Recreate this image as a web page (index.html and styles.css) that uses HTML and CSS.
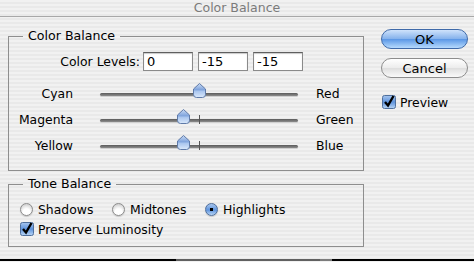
FILE: index.html
```html
<!DOCTYPE html>
<html>
  <head>
    <link rel="stylesheet" href="styles.css">
  </head>
  <body>
    <div class="titlebar">Color Balance</div>
    <div class="dialog">
      <div class="panels">
        <fieldset class="group levels">
          <legend>Color Balance</legend>
          <div class="levels-row">
            <span class="levels-label">Color Levels:</span>
            <input class="level" type="text" value="0">
            <input class="level" type="text" value="-15">
            <input class="level" type="text" value="-15">
          </div>
          <div class="slider-row">
            <span class="slider-label">Cyan</span>
            <div class="track">
              <svg class="thumb" style="left: 93px" width="13" height="15" viewBox="0 0 13 15">
                <use href="#thumbShape"/>
              </svg>
            </div>
            <span class="slider-end">Red</span>
          </div>
          <div class="slider-row">
            <span class="slider-label">Magenta</span>
            <div class="track">
              <span class="tick"></span>
              <svg class="thumb" style="left: 77px" width="13" height="15" viewBox="0 0 13 15">
                <use href="#thumbShape"/>
              </svg>
            </div>
            <span class="slider-end">Green</span>
          </div>
          <div class="slider-row">
            <span class="slider-label">Yellow</span>
            <div class="track">
              <span class="tick"></span>
              <svg class="thumb" style="left: 77px" width="13" height="15" viewBox="0 0 13 15">
                <use href="#thumbShape"/>
              </svg>
            </div>
            <span class="slider-end">Blue</span>
          </div>
        </fieldset>
        <fieldset class="group tones">
          <legend>Tone Balance</legend>
          <div class="radio-row">
            <label class="option"><span class="radio"></span>Shadows</label>
            <label class="option"><span class="radio"></span>Midtones</label>
            <label class="option"><span class="radio checked"></span>Highlights</label>
          </div>
          <label class="check-row">
            <svg class="checkbox" width="14" height="14" viewBox="0 0 14 14"><use href="#checkShape"/></svg>Preserve Luminosity
          </label>
        </fieldset>
      </div>
      <div class="actions">
        <button class="pill default">OK</button>
        <button class="pill">Cancel</button>
        <label class="check-row preview">
          <svg class="checkbox" width="14" height="14" viewBox="0 0 14 14"><use href="#checkShape"/></svg>Preview
        </label>
      </div>
    </div>
    <div class="dock">
      <span class="dock-dark"></span>
      <span class="dock-app"></span>
      <span class="dock-edge"></span>
    </div>

    <svg width="0" height="0" class="defs">
      <defs>
        <linearGradient id="thumbFill" x1="0" y1="0" x2="0" y2="1">
          <stop offset="0" stop-color="#c9dbf4"/>
          <stop offset="0.45" stop-color="#7fa3dc"/>
          <stop offset="0.55" stop-color="#a9c5ee"/>
          <stop offset="1" stop-color="#dbe9fb"/>
        </linearGradient>
        <linearGradient id="checkFill" x1="0" y1="0" x2="0" y2="1">
          <stop offset="0" stop-color="#a8c6ee"/>
          <stop offset="0.5" stop-color="#5e93dc"/>
          <stop offset="1" stop-color="#b9d6f6"/>
        </linearGradient>
        <g id="thumbShape">
          <path d="M6.5 0.5 L12.5 6 V11.5 Q12.5 14.5 9.5 14.5 H3.5 Q0.5 14.5 0.5 11.5 V6 Z" fill="url(#thumbFill)" stroke="#5f7aa8"/>
        </g>
        <g id="checkShape">
          <rect x="0.5" y="0.5" width="13" height="13" rx="2" fill="url(#checkFill)" stroke="#4f6f9c"/>
          <path d="M3 7 L6 10.5 L11.5 1" fill="none" stroke="#000" stroke-width="2.4"/>
        </g>
      </defs>
    </svg>
  </body>
</html>
```
FILE: styles.css
```css
html, body {
    margin: 0;
    padding: 0;
}
body {
    width: 474px;
    height: 262px;
    overflow: hidden;
    font-family: "DejaVu Sans", sans-serif;
    font-size: 12.4px;
    color: #000;
    background: repeating-linear-gradient(to bottom, #f1f1f1 0 2px, #e9e9e9 2px 4px);
}
.defs {
    position: absolute;
}
.titlebar {
    height: 16px;
    line-height: 16px;
    text-align: center;
    color: #7b7b7b;
    font-size: 12.5px;
    border-bottom: 1px solid #a8a8a8;
}
.dialog {
    display: flex;
    padding-left: 8px;
    margin-top: 11px;
}
.panels {
    width: 356px;
}
.group {
    margin: 0;
    padding: 0;
    min-width: 0;
    border: 1px solid #8e8e8e;
}
.group legend {
    margin-left: 14px;
    padding: 0 5px;
    height: 16px;
    line-height: 16px;
    font-size: 12.6px;
}
.levels {
    padding-bottom: 12px;
}
.levels-row {
    display: flex;
    align-items: center;
    margin-top: 8px;
}
.levels-label {
    width: 131px;
    padding-right: 3px;
    text-align: right;
}
.level {
    box-sizing: border-box;
    width: 50px;
    height: 19px;
    margin: 0 5px 0 0;
    padding: 0 3px;
    border: 1px solid #8a8a8a;
    border-top-color: #5f5f5f;
    box-shadow: inset 0 1px 1px #c9c9c9;
    background: #fff;
    font: inherit;
    font-size: 13px;
    color: #000;
}
.slider-row {
    display: flex;
    align-items: center;
    height: 26px;
}
.levels-row + .slider-row {
    margin-top: 9px;
}
.slider-label {
    width: 64px;
    text-align: right;
}
.track {
    position: relative;
    width: 198px;
    height: 3px;
    margin-left: 27px;
    margin-top: 2px;
    border-radius: 2px;
    background: linear-gradient(to bottom, #5a5a5a, #8d8d8d);
    box-shadow: 0 1px 0 #d0d0d0;
}
.thumb {
    position: absolute;
    top: -10px;
}
.tick {
    position: absolute;
    left: 99px;
    top: -4px;
    width: 1px;
    height: 9px;
    background: #555;
}
.slider-end {
    margin-left: 18px;
}
.tones {
    margin-top: 5px;
    padding-bottom: 7px;
}
.radio-row {
    display: flex;
    align-items: center;
    height: 20px;
    margin-top: 7px;
    padding-left: 11px;
}
.option {
    display: flex;
    align-items: center;
    gap: 5px;
}
.option:nth-child(1) { width: 92px; }
.option:nth-child(2) { width: 93px; }
.radio {
    box-sizing: border-box;
    width: 13px;
    height: 13px;
    border-radius: 50%;
    border: 1px solid #8c8c8c;
    background: radial-gradient(circle at 50% 75%, #ffffff 0 35%, #dcdcdc 70%, #c4c4c4);
    box-shadow: 0 1px 1px #c8c8c8;
}
.radio.checked {
    border-color: #4f6f9c;
    background: radial-gradient(circle, #000 0 1.6px, transparent 2px),
                linear-gradient(to bottom, #a8c6ee, #5e93dc 55%, #b9d6f6);
}
.check-row {
    display: flex;
    align-items: center;
    gap: 4px;
    height: 20px;
    padding-left: 11px;
}
.actions {
    display: flex;
    flex-direction: column;
    margin-left: 17px;
    padding-top: 1px;
}
.pill {
    box-sizing: border-box;
    width: 87px;
    height: 20px;
    margin-bottom: 9px;
    padding: 0;
    border: 1px solid #8d8d8d;
    border-radius: 10px;
    background: linear-gradient(to bottom, #ffffff, #ececec 50%, #dedede 51%, #fafafa);
    font: inherit;
    font-size: 13px;
    color: #000;
}
.pill.default {
    border-color: #3f6aa9;
    background: linear-gradient(to bottom, #cfe2fb, #86b3ec 48%, #5c98e6 52%, #b6dafd);
}
.preview {
    padding-left: 1px;
    margin-top: 5px;
}
.dock {
    display: flex;
    margin-top: 12px;
    height: 2px;
    background: #000;
}
.dock-dark {
    width: 176px;
}
.dock-app {
    width: 144px;
    background: #606060;
}
.dock-edge {
    width: 12px;
    background: #7c7c7c;
}
```
